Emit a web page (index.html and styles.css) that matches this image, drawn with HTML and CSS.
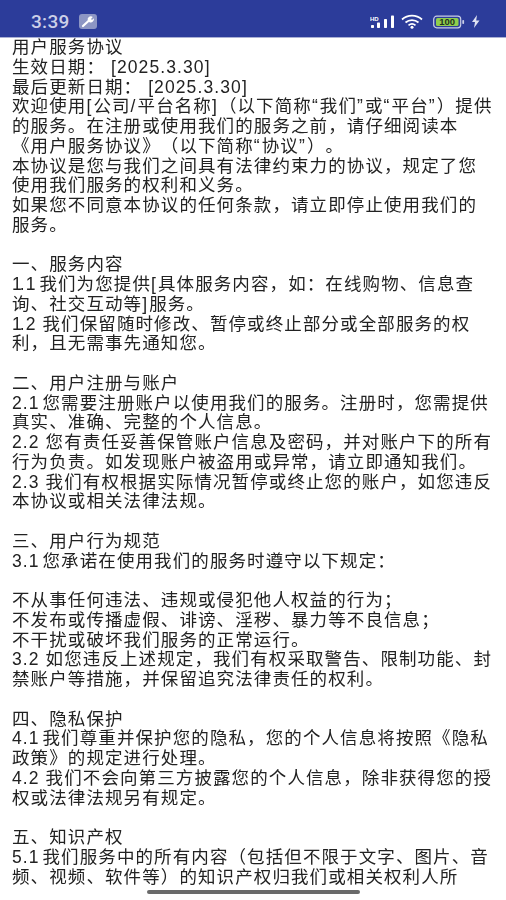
FILE: index.html
```html
<!DOCTYPE html>
<html lang="zh-CN">
<head>
<meta charset="utf-8">
<title>用户服务协议</title>
<link rel="stylesheet" href="styles.css">
</head>
<body>
<div class="phone">
<header class="status">
  <div class="status-left">
    <span class="time">3:39</span>
    <svg class="wrench" width="18" height="15" viewBox="0 0 18 15"><rect x="0" y="0" width="18" height="15" rx="3" fill="#8d96c4"/><path d="M4 12 L10 6.5" stroke="#fff" stroke-width="2.2" stroke-linecap="round"/><path d="M9 7 A3.2 3.2 0 0 1 13.8 3 L12 5 L13 6 L14.8 4.3 A3.2 3.2 0 0 1 10.5 8.2 Z" fill="#fff"/></svg>
  </div>
  <div class="status-right">
    <svg width="25" height="14" viewBox="0 0 25 14"><text x="0" y="5.5" class="hd">HD</text><g fill="#fff"><rect x="1" y="10" width="3" height="3" rx="0.7"/><rect x="7" y="7.5" width="3" height="5.5" rx="0.7"/><rect x="14" y="4" width="3" height="9" rx="0.7"/><rect x="21" y="0.5" width="3" height="12.5" rx="0.7"/></g></svg>
    <svg class="wifi" width="24" height="15" viewBox="0 0 24 15"><g fill="none" stroke="#fff" stroke-width="1.7"><path d="M1 5.5 A15 15 0 0 1 21 5.5"/><path d="M4.5 8.5 A10 10 0 0 1 17.5 8.5"/><path d="M7.5 11.3 A5.5 5.5 0 0 1 14.5 11.3"/></g><circle cx="11" cy="13.3" r="1.5" fill="#fff"/></svg>
    <svg class="battery" width="32" height="14" viewBox="0 0 32 14"><rect x="0.7" y="1.2" width="27" height="11.6" rx="3" fill="none" stroke="#c9cee6" stroke-width="1.2"/><rect x="3" y="3" width="22.5" height="8" rx="1.5" fill="#8fce4c"/><text x="14.2" y="10.2" class="pct">100</text><rect x="29.3" y="5" width="1.8" height="4" rx="0.8" fill="#c9cee6"/></svg>
    <svg class="bolt" width="9" height="13" viewBox="0 0 9 13"><path d="M6 0 L1 7 H4 L3 13 L8.5 5.5 H5.2 Z" fill="#dfe2f2"/></svg>
  </div>
</header>
<main class="doc">
<div>用户服务协议</div>
<div>生效日期： [2025.3.30]</div>
<div>最后更新日期： [2025.3.30]</div>
<div>欢迎使用<span class="b">[</span>公司<span class="b">/</span>平台名称<span class="b">]</span>（以下简称<span class="q">“</span>我们<span class="q">”</span>或<span class="q">“</span>平台<span class="q">”</span>）提供</div>
<div>的服务。在注册或使用我们的服务之前，请仔细阅读本</div>
<div>《用户服务协议》（以下简称<span class="q">“</span>协议<span class="q">”</span>）。</div>
<div>本协议是您与我们之间具有法律约束力的协议，规定了您</div>
<div>使用我们服务的权利和义务。</div>
<div>如果您不同意本协议的任何条款，请立即停止使用我们的</div>
<div>服务。</div>
<div class="blank"></div>
<div>一、服务内容</div>
<div><span class="one">1</span>.<span class="one">1</span> 我们为您提供<span class="b">[</span>具体服务内容，如：在线购物、信息查</div>
<div>询、社交互动等<span class="b">]</span>服务。</div>
<div><span class="one">1</span>.2 我们保留随时修改、暂停或终止部分或全部服务的权</div>
<div>利，且无需事先通知您。</div>
<div class="blank"></div>
<div>二、用户注册与账户</div>
<div>2.<span class="one">1</span> 您需要注册账户以使用我们的服务。注册时，您需提供</div>
<div>真实、准确、完整的个人信息。</div>
<div>2.2 您有责任妥善保管账户信息及密码，并对账户下的所有</div>
<div>行为负责。如发现账户被盗用或异常，请立即通知我们。</div>
<div>2.3 我们有权根据实际情况暂停或终止您的账户，如您违反</div>
<div>本协议或相关法律法规。</div>
<div class="blank"></div>
<div>三、用户行为规范</div>
<div>3.<span class="one">1</span> 您承诺在使用我们的服务时遵守以下规定：</div>
<div class="blank"></div>
<div>不从事任何违法、违规或侵犯他人权益的行为；</div>
<div>不发布或传播虚假、诽谤、淫秽、暴力等不良信息；</div>
<div>不干扰或破坏我们服务的正常运行。</div>
<div>3.2 如您违反上述规定，我们有权采取警告、限制功能、封</div>
<div>禁账户等措施，并保留追究法律责任的权利。</div>
<div class="blank"></div>
<div>四、隐私保护</div>
<div>4.<span class="one">1</span> 我们尊重并保护您的隐私，您的个人信息将按照《隐私</div>
<div>政策》的规定进行处理。</div>
<div>4.2 我们不会向第三方披露您的个人信息，除非获得您的授</div>
<div>权或法律法规另有规定。</div>
<div class="blank"></div>
<div>五、知识产权</div>
<div>5.<span class="one">1</span> 我们服务中的所有内容（包括但不限于文字、图片、音</div>
<div>频、视频、软件等）的知识产权归我们或相关权利人所</div>
</main>
<div class="home"></div>
</div>
</body>
</html>
```
FILE: styles.css
```css
* { box-sizing: border-box; }
html, body { margin: 0; padding: 0; background: #fff; }
.phone { position: relative; width: 506px; height: 900px; overflow: hidden; background: #fff; }
.status {
  height: 38px;
  background: #2c3c9a;
  border-bottom: 1px solid #aab0d4;
  display: flex;
  align-items: center;
  justify-content: space-between;
  padding: 6px 26px 0 31px;
  color: #ccd0e8;
}
.status-left { display: flex; align-items: center; gap: 9px; }
.time { font: 500 19px/1 Roboto, "Liberation Sans", sans-serif; letter-spacing: 0.3px; }
.status-right { display: flex; align-items: center; gap: 6px; }
.wifi { margin-right: 2px; }
.hd { font: 700 6px "Liberation Sans", sans-serif; fill: #fff; }
.pct { font: 700 9.5px "Liberation Sans", sans-serif; fill: #1f3320; text-anchor: middle; }
.doc {
  padding: 0 12px;
  font-family: "Liberation Sans", "Noto Sans CJK SC", sans-serif;
  font-size: 17.5px;
  letter-spacing: 1.1px;
  line-height: 19.75px;
  color: #222;
  white-space: nowrap;
  text-spacing-trim: space-all;
  filter: blur(0.3px);
}
.q { letter-spacing: 2.1px; }
.b { letter-spacing: 2.1px; }
.one { letter-spacing: -2px; }
.blank { height: 19.75px; }
.home {
  position: absolute;
  left: 147px;
  bottom: 6px;
  width: 213px;
  height: 4px;
  border-radius: 2px;
  background: #6a6a6a;
}
```
